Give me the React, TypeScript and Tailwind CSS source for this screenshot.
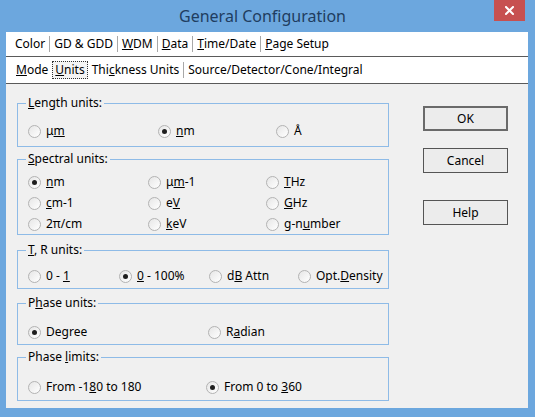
import type { ReactNode } from "react";

const font = { fontFamily: '"Noto Sans", "Open Sans", Arial, sans-serif' };

function Radio({ checked }: { checked?: boolean }) {
  return (
    <span className="flex h-[13px] w-[13px] shrink-0 items-center justify-center rounded-full border border-[#b3b3b3] bg-gradient-to-br from-[#e6e6e6] to-white">
      {checked && <span className="h-[5px] w-[5px] rounded-full bg-[#1e1e1e]" />}
    </span>
  );
}

function Option({ label, checked, w }: { label: ReactNode; checked?: boolean; w: string }) {
  return (
    <div className={`flex h-[20px] items-center gap-[5px] ${w}`}>
      <Radio checked={checked} />
      <span className="whitespace-nowrap">{label}</span>
    </div>
  );
}

function Group({ title, children, body, className = "" }: { title: ReactNode; children: ReactNode; body: string; className?: string }) {
  return (
    <fieldset className={`border border-[#8ebbe7] px-0 ${className}`}>
      <legend className="ml-[8px] px-[2px] leading-[16px]">{title}</legend>
      <div className={`pl-[10px] ${body}`}>{children}</div>
    </fieldset>
  );
}

function Sep() {
  return <span className="mx-[4px] h-[16px] w-px bg-[#a8a8a8]" />;
}

function DlgButton({ children, def }: { children: ReactNode; def?: boolean }) {
  return (
    <button
      type="button"
      className={`h-[25px] w-[85px] bg-[#ececec] text-[12px] ${def ? "border-2 border-[#6a6a6a]" : "border border-[#555]"}`}
    >
      {children}
    </button>
  );
}

export default function App() {
  return (
    <div className="flex h-[417px] w-[535px] flex-col bg-[#6ca7de] text-[12px] text-black" style={font}>
      <div className="relative flex h-[32px] shrink-0 items-center justify-center pr-[10px]">
        <span className="text-[16px] text-[#1f3d60]">General Configuration</span>
        <div className="absolute right-[10px] top-0 flex h-[21px] w-[31px] items-center justify-center bg-[#c75050]">
          <svg width="9" height="9" viewBox="0 0 9 9">
            <path d="M1 1 L8 8 M8 1 L1 8" stroke="white" strokeWidth="2" strokeLinecap="square" />
          </svg>
        </div>
      </div>

      <div className="mb-[9px] ml-[6px] mr-[7px] flex flex-1 flex-col bg-[#f0f0f0]">
        <div className="flex h-[25px] items-center border-b border-[#5a5a5a] bg-white pl-[9px]">
          <span>Color</span>
          <Sep />
          <span>GD &amp; GDD</span>
          <Sep />
          <span><u>W</u>DM</span>
          <Sep />
          <span><u>D</u>ata</span>
          <Sep />
          <span><u>T</u>ime/Date</span>
          <Sep />
          <span><u>P</u>age Setup</span>
        </div>
        <div className="flex h-[27px] items-center border-b border-[#5a5a5a] bg-white pl-[10px]">
          <span><u>M</u>ode</span>
          <span className="ml-[4px] border border-dotted border-[#333] bg-[#f4f4f4] px-[2px] leading-[16px]"><u>U</u>nits</span>
          <span className="ml-[4px]">Thi<u>c</u>kness Units</span>
          <Sep />
          <span>Source/Detector/Cone/Integral</span>
        </div>

        <div className="flex">
          <div className="ml-[11px] mt-[11px] flex w-[372px] flex-col">
            <Group title={<><u>L</u>ength units:</>} body="pt-[10px] pb-[5px]">
              <div className="flex">
                <Option w="w-[130px]" label={<>μ<u>m</u></>} />
                <Option w="w-[118px]" checked label={<><u>n</u>m</>} />
                <Option w="w-[100px]" label="Å" />
              </div>
            </Group>

            <Group className="mt-[4px]" title={<><u>S</u>pectral units:</>} body="flex flex-col gap-[1px] pt-[5px]">
              <div className="flex">
                <Option w="w-[120px]" checked label={<><u>n</u>m</>} />
                <Option w="w-[118px]" label={<>μ<u>m</u>-1</>} />
                <Option w="w-[100px]" label={<><u>T</u>Hz</>} />
              </div>
              <div className="flex">
                <Option w="w-[120px]" label={<><u>c</u>m-1</>} />
                <Option w="w-[118px]" label={<>e<u>V</u></>} />
                <Option w="w-[100px]" label={<><u>G</u>Hz</>} />
              </div>
              <div className="flex">
                <Option w="w-[120px]" label="2π/cm" />
                <Option w="w-[118px]" label={<><u>k</u>eV</>} />
                <Option w="w-[100px]" label={<>g-n<u>u</u>mber</>} />
              </div>
            </Group>

            <Group className="mt-[7px]" title={<><u>T</u>, R units:</>} body="pt-[8px] pb-[2px]">
              <div className="flex">
                <Option w="w-[91px]" label={<>0 - <u>1</u></>} />
                <Option w="w-[90px]" checked label={<><u>0</u> - 100%</>} />
                <Option w="w-[89px]" label={<>d<u>B</u> Attn</>} />
                <Option w="w-[90px]" label={<>Opt.<u>D</u>ensity</>} />
              </div>
            </Group>

            <Group className="mt-[6px]" title={<>P<u>h</u>ase units:</>} body="pt-[11px] pb-[2px]">
              <div className="flex">
                <Option w="w-[180px]" checked label={<>De<u>g</u>ree</>} />
                <Option w="w-[150px]" label={<>R<u>a</u>dian</>} />
              </div>
            </Group>

            <Group className="mt-[4px]" title={<>Phase <u>l</u>imits:</>} body="pt-[12px] pb-[3px]">
              <div className="flex">
                <Option w="w-[178px]" label={<>From -1<u>8</u>0 to 180</>} />
                <Option w="w-[150px]" checked label={<>From 0 to <u>3</u>60</>} />
              </div>
            </Group>
          </div>

          <div className="ml-[34px] mt-[22px] flex flex-col">
            <DlgButton def>OK</DlgButton>
            <div className="mt-[17px]">
              <DlgButton>Cancel</DlgButton>
            </div>
            <div className="mt-[27px]">
              <DlgButton>Help</DlgButton>
            </div>
          </div>
        </div>
      </div>
    </div>
  );
}
